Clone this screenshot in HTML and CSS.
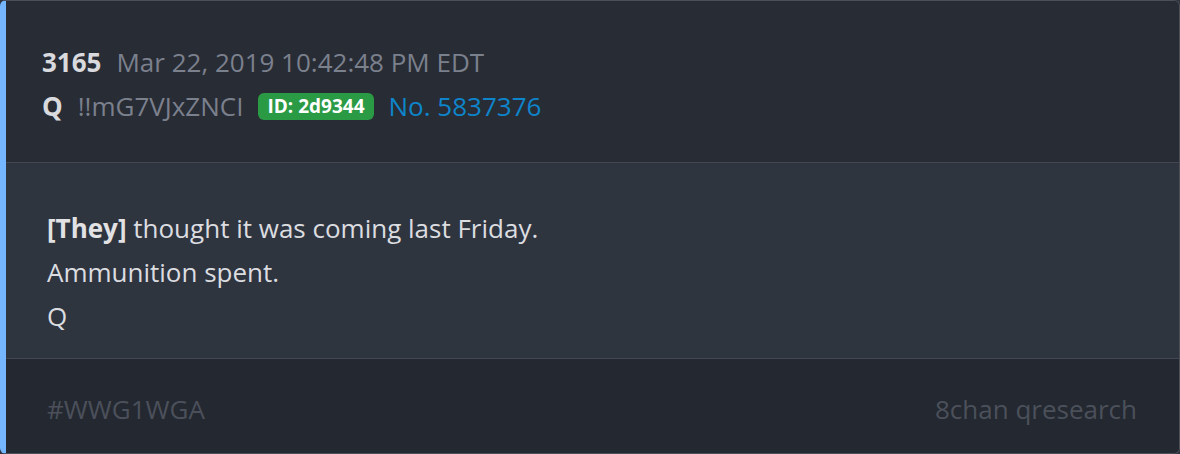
FILE: index.html
```html
<!DOCTYPE html>
<html lang="en">
<head>
    <meta charset="UTF-8">
    <title>Q Post 3165</title>
    <link rel="stylesheet" href="styles.css">
</head>
<body>
    <div class="post">
        <div class="post-header">
            <div class="meta-line">
                <b class="post-num">3165</b>
                <span class="post-date">Mar 22, 2019 10:42:48 PM EDT</span>
            </div>
            <div class="meta-line">
                <b class="post-name">Q</b>
                <span class="trip">!!mG7VJxZNCI</span>
                <span class="id-badge">ID: 2d9344</span>
                <a class="post-link" href="#">No. 5837376</a>
            </div>
        </div>
        <div class="post-body">
            <p><b>[They]</b> thought it was coming last Friday.</p>
            <p>Ammunition spent.</p>
            <p>Q</p>
        </div>
        <div class="post-footer">
            <span>#WWG1WGA</span>
            <span>8chan qresearch</span>
        </div>
    </div>
</body>
</html>
```

FILE: styles.css
```css
* {
    padding: 0;
    margin: 0;
    box-sizing: border-box;
    font-family: "Open Sans", sans-serif;
}
body {
    background: #2f343e;
}
.post {
    width: 1180px;
    height: 454px;
    border: 1px solid #4a4f5a;
    border-left: 6px solid #74b6ff;
    border-radius: 6px;
    overflow: hidden;
    display: flex;
    flex-direction: column;
    font-size: 26px;
    line-height: 44px;
}
.post-header {
    background: #282c35;
    padding: 39px 36px 34px;
    border-bottom: 1px solid #414651;
}
.meta-line {
    display: flex;
    align-items: center;
    gap: 15px;
}
.post-num,
.post-name {
    color: #d9dadd;
    font-weight: bold;
}
.post-date,
.trip {
    color: #7b808d;
}
.id-badge {
    background: #2b9a45;
    color: white;
    font-size: 19px;
    font-weight: bold;
    line-height: 27px;
    padding: 0 9px;
    border-radius: 6px;
}
.post-link {
    color: #0e85cb;
    text-decoration: none;
}
.post-body {
    background: #2f353f;
    color: #dcdde0;
    padding: 43px 41px 20px;
    border-bottom: 1px solid #414651;
}
.post-body b {
    color: #e2e2e4;
}
.post-footer {
    flex-grow: 1;
    background: #242830;
    color: #4b505b;
    padding: 28px 42px 0 41px;
    display: flex;
    justify-content: space-between;
}
```
